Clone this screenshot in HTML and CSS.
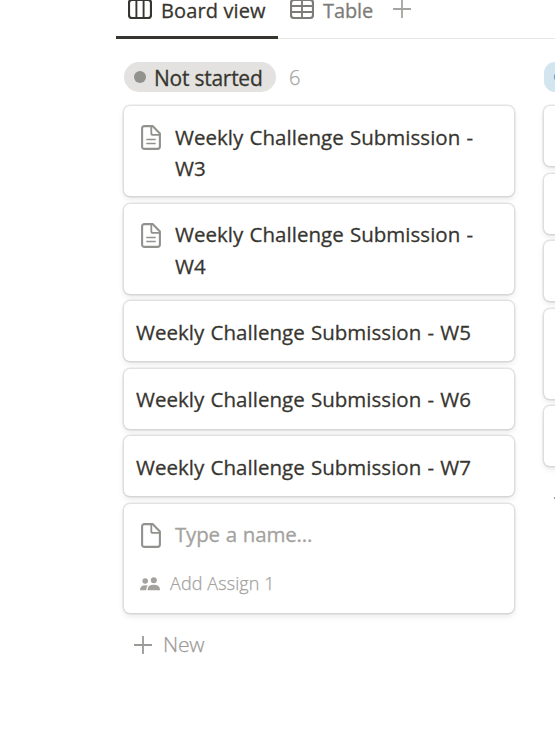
FILE: index.html
```html
<!DOCTYPE html>
<html lang="en">
<head>
<meta charset="utf-8">
<title>Board view</title>
<link rel="stylesheet" href="styles.css">
</head>
<body>
<svg class="defs" width="0" height="0">
  <symbol id="page" viewBox="0 0 20 25">
    <path d="M3.5 1.1H11.6L18.9 8.5V21.5Q18.9 23.9 16.5 23.9H3.5Q1.1 23.9 1.1 21.5V3.5Q1.1 1.1 3.5 1.1Z" fill="none" stroke="currentColor" stroke-width="2.1" stroke-linejoin="round"/>
    <path d="M10.3 1.5V8.2Q10.3 9.9 12 9.9H18.6" fill="none" stroke="currentColor" stroke-width="1.8"/>
  </symbol>
  <symbol id="plus" viewBox="0 0 18 18">
    <path d="M9 .4V17.6M.4 9H17.6" fill="none" stroke="currentColor" stroke-width="1.8" stroke-linecap="round"/>
  </symbol>
</svg>
<nav class="tabs">
  <div class="tab active">
    <svg class="tab-icon" viewBox="0 0 24 20"><path d="M4 1H20Q23 1 23 4V16Q23 19 20 19H4Q1 19 1 16V4Q1 1 4 1Z" fill="none" stroke="currentColor" stroke-width="2.2"/><path d="M8.4 1V19M15.6 1V19" stroke="currentColor" stroke-width="1.9"/></svg>
    <span class="tab-label">Board view</span>
  </div>
  <div class="tab">
    <svg class="tab-icon" viewBox="0 0 24 20"><path d="M4 1H20Q23 1 23 4V16Q23 19 20 19H4Q1 19 1 16V4Q1 1 4 1Z" fill="none" stroke="currentColor" stroke-width="2.2"/><path d="M1 7H23M1 13H23M12 1V19" stroke="currentColor" stroke-width="1.9"/></svg>
    <span class="tab-label table-label">Table</span>
  </div>
  <svg class="add-view"><use href="#plus"/></svg>
</nav>
<main class="board">
  <section class="column">
    <header class="group">
      <span class="pill"><i class="dot"></i><span class="pill-label">Not started</span></span>
      <span class="count">6</span>
    </header>
    <article class="card tall"><svg class="page-icon"><use href="#page"/><path d="M5.3 14.6H14.7M5.3 18.6H14.7" stroke="currentColor" stroke-width="1.5"/></svg><h3 class="title">Weekly Challenge Submission -<br>W3</h3></article>
    <article class="card tall"><svg class="page-icon"><use href="#page"/><path d="M5.3 14.6H14.7M5.3 18.6H14.7" stroke="currentColor" stroke-width="1.5"/></svg><h3 class="title">Weekly Challenge Submission -<br>W4</h3></article>
    <article class="card"><h3 class="title">Weekly Challenge Submission - W5</h3></article>
    <article class="card"><h3 class="title">Weekly Challenge Submission - W6</h3></article>
    <article class="card"><h3 class="title">Weekly Challenge Submission - W7</h3></article>
    <article class="card draft">
      <div class="draft-name"><svg class="page-icon"><use href="#page"/></svg><h3 class="title placeholder">Type a name...</h3></div>
      <div class="assign">
        <svg class="people" viewBox="0 0 20 14"><circle cx="5.2" cy="4" r="2.8"/><circle cx="13.8" cy="3.2" r="3"/><path d="M0 13.2Q0 8.2 5.2 8.2 6.8 8.2 7.8 8.8 6.2 10.2 6.2 13.2ZM7.5 13.2Q7.5 7.8 13.8 7.8T20 13.2Z"/></svg>
        <span class="assign-label">Add Assign 1</span>
      </div>
    </article>
    <div class="new"><svg class="new-icon"><use href="#plus"/></svg><span class="new-label">New</span></div>
  </section>
  <section class="column next">
    <header class="group"><span class="pill blue"><i class="dot"></i></span></header>
    <article class="card"></article>
    <article class="card"></article>
    <article class="card"></article>
    <article class="card tall"></article>
    <article class="card"></article>
    <div class="new"><svg class="new-icon"><use href="#plus"/></svg></div>
  </section>
</main>
</body>
</html>
```
FILE: styles.css
```css
* { box-sizing: border-box; }
html, body { height: 100%; }
body {
  margin: 0;
  overflow: hidden;
  background: #fff;
  color: #37352f;
  font-family: "Open Sans", "Noto Sans", sans-serif;
  font-size: 21px;
  line-height: 31.5px;
}
svg { display: block; flex: none; }
.defs { position: absolute; }
.tabs {
  display: flex;
  height: 39px;
  margin-left: 116px;
  box-shadow: inset 0 -1px #e6e6e5;
  color: #7d7c78;
}
.tab { display: flex; height: 39px; padding: 0 12px; }
.tab.active { width: 162px; color: #37352f; border-bottom: 3px solid #37352f; }
.tab-icon { width: 24px; height: 20px; margin: -1px 9px 0 0; }
.tab-label {
  font-size: 20px;
  line-height: 21px;
  letter-spacing: .12px;
  white-space: nowrap;
  -webkit-text-stroke: .28px currentColor;
}
.table-label { letter-spacing: -.1px; }
.add-view { width: 18px; height: 18px; margin-left: 8px; color: #a5a4a0; }
.board { display: flex; gap: 30px; padding: 23px 0 0 124px; }
.column { display: flex; flex: none; flex-direction: column; gap: 7.5px; width: 390px; }
.next { flex: 1 1 0; width: auto; }
.group { display: flex; height: 36.5px; }
.pill {
  display: flex;
  align-items: center;
  width: 152px;
  height: 30px;
  flex: none;
  padding-left: 10px;
  border-radius: 15px;
  background: #e3e2e0;
}
.pill-label {
  margin: 3px 0 0 8px;
  white-space: nowrap;
  letter-spacing: -.25px;
  -webkit-text-stroke: .28px currentColor;
}
.dot { width: 12px; height: 12px; flex: none; border-radius: 50%; background: #91918e; }
.blue { width: 11px; overflow: hidden; border-radius: 15px 0 0 15px; background: #d3e5ef; }
.blue .dot { background: #5b97bd; }
.count {
  margin-left: 13px;
  color: #a5a4a0;
  font-size: 20px;
  font-weight: 300;
  -webkit-text-stroke: .25px currentColor;
}
.card {
  display: flex;
  flex: none;
  height: 60px;
  padding: 15.5px 12px;
  border-radius: 6px;
  background: #fff;
  box-shadow: 0 0 0 1.5px rgba(15, 15, 15, .1), 0 3px 6px rgba(15, 15, 15, .1);
}
.next .card { border-radius: 6px 0 0 6px; }
.tall { height: 90px; }
.title {
  margin: 0;
  font-size: 20.5px;
  font-weight: 400;
  letter-spacing: .03px;
  word-spacing: .8px;
  white-space: nowrap;
  -webkit-text-stroke: .28px currentColor;
}
.page-icon { width: 20px; height: 25px; margin: 3.5px 14.5px 0 4.5px; color: #91918e; }
.draft { height: 109.5px; flex-direction: column; }
.draft-name { display: flex; }
.placeholder { color: #a3a29e; letter-spacing: -.2px; }
.assign { display: flex; margin-top: 17.5px; color: #a3a29e; }
.people { width: 20px; height: 14px; margin: 9px 10px 0 4px; fill: currentColor; }
.assign-label {
  font-size: 18px;
  font-weight: 300;
  letter-spacing: .1px;
  white-space: nowrap;
  -webkit-text-stroke: .25px currentColor;
}
.new { display: flex; padding: 8.5px 0 0 10px; color: #9b9a97; }
.new-icon { width: 18px; height: 18px; margin-top: 7px; }
.new-label { margin-left: 11px; font-weight: 300; letter-spacing: -.2px; -webkit-text-stroke: .25px currentColor; }
```
